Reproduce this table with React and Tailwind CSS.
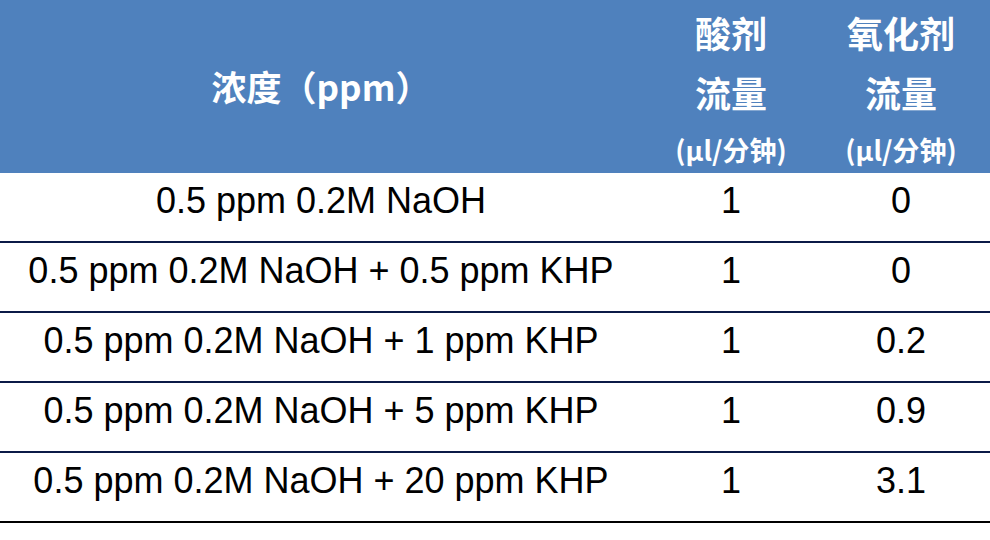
const rows = [
  { name: '0.5 ppm 0.2M NaOH', acid: '1', ox: '0' },
  { name: '0.5 ppm 0.2M NaOH + 0.5 ppm KHP', acid: '1', ox: '0' },
  { name: '0.5 ppm 0.2M NaOH + 1 ppm KHP', acid: '1', ox: '0.2' },
  { name: '0.5 ppm 0.2M NaOH + 5 ppm KHP', acid: '1', ox: '0.9' },
  { name: '0.5 ppm 0.2M NaOH + 20 ppm KHP', acid: '1', ox: '3.1' },
];

const cjk = { fontFamily: '"Noto Sans CJK SC", "Noto Sans", sans-serif' };

const HeadCol = ({ top }) => (
  <div className="flex flex-col items-center pt-[2px] font-bold text-white" style={cjk}>
    <div className="text-[36px] leading-[60px]">{top}</div>
    <div className="text-[36px] leading-[60px]">流量</div>
    <div className="mt-[8px] text-[27px] leading-[40px]">(μl/分钟)</div>
  </div>
);

export default function App() {
  return (
    <div className="w-[990px] h-[540px] bg-white overflow-hidden" style={{ fontFamily: '"Liberation Sans", Arial, sans-serif' }}>
      <div className="grid grid-cols-[642px_178px_170px] h-[173px] bg-[#4f81bd]">
        <div className="flex items-center justify-center text-[35px] font-bold text-white" style={cjk}>
          浓度（ppm）
        </div>
        <HeadCol top="酸剂" />
        <div className="pr-[8px]">
          <HeadCol top="氧化剂" />
        </div>
      </div>
      {rows.map((r, i) => (
        <div
          key={i}
          className={`grid grid-cols-[642px_178px_170px] h-[70px] border-b-2 text-[36px] text-black ${
            i === rows.length - 1 ? 'border-black' : 'border-[#0b1a47]'
          }`}
        >
          <div className="flex items-center justify-center pb-[13px] whitespace-nowrap">{r.name}</div>
          <div className="flex items-center justify-center pb-[13px]">{r.acid}</div>
          <div className="flex items-center justify-center pb-[13px] pr-[8px]">{r.ox}</div>
        </div>
      ))}
    </div>
  );
}
